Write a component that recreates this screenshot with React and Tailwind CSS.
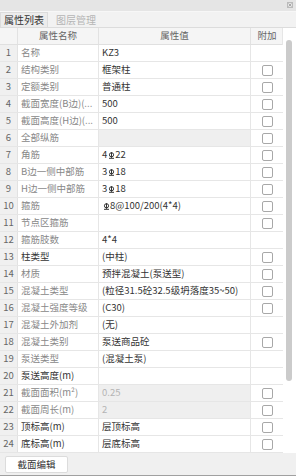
import React from 'react';

const FONT = { fontFamily: '"Noto Sans CJK SC", "Noto Sans", sans-serif' };

// rebar grade symbol (HRB400)
function Bar() {
  return (
    <svg width="7" height="7" viewBox="0 0 7 7" className="inline-block align-top mt-[0.5px] mx-[0.5px]">
      <circle cx="3.5" cy="2.8" r="2.1" fill="none" stroke="#333" strokeWidth="1" />
      <path d="M3.5 0.2v5.6M1 6.3h5" stroke="#333" strokeWidth="1" />
    </svg>
  );
}

const rows = [
  { name: '名称', value: 'KZ3', check: false },
  { name: '结构类别', value: '框架柱', check: true },
  { name: '定额类别', value: '普通柱', check: true },
  { name: '截面宽度(B边)(...', value: '500', check: true },
  { name: '截面高度(H边)(...', value: '500', check: true },
  { name: '全部纵筋', value: '', check: true, grayValue: true },
  { name: '角筋', value: <>4<Bar />22</>, check: true },
  { name: 'B边一侧中部筋', value: <>3<Bar />18</>, check: true },
  { name: 'H边一侧中部筋', value: <>3<Bar />18</>, check: true },
  { name: '箍筋', value: <><Bar />8@100/200(4*4)</>, check: true },
  { name: '节点区箍筋', value: '', check: true },
  { name: '箍筋肢数', value: '4*4', check: false },
  { name: '柱类型', value: '(中柱)', check: true, dark: true },
  { name: '材质', value: '预拌混凝土(泵送型)', check: true },
  { name: '混凝土类型', value: '(粒径31.5砼32.5级坍落度35~50)', check: true },
  { name: '混凝土强度等级', value: '(C30)', check: true },
  { name: '混凝土外加剂', value: '(无)', check: false },
  { name: '混凝土类别', value: '泵送商品砼', check: true },
  { name: '泵送类型', value: '(混凝土泵)', check: false },
  { name: '泵送高度(m)', value: '', check: false, dark: true },
  { name: '截面面积(m²)', value: '0.25', check: true, grayValue: true, dim: true },
  { name: '截面周长(m)', value: '2', check: true, grayValue: true, dim: true },
  { name: '顶标高(m)', value: '层顶标高', check: true, dark: true },
  { name: '底标高(m)', value: '层底标高', check: true, dark: true },
];

function Row({ row, index }) {
  return (
    <div className="grid grid-cols-[18px_81px_152px_32px] h-[17px] border-b border-[#e6e6e6]">
      <div className="bg-[#f0f0f0] border-r border-[#e2e2e2] flex items-center justify-center text-[#666]">
        {index + 1}
      </div>
      <div className={`border-r border-[#e6e6e6] flex items-center pl-[3px] whitespace-nowrap overflow-hidden ${row.dark ? 'text-[#333]' : 'text-[#888]'}`}>
        {row.name}
      </div>
      <div className={`border-r border-[#e6e6e6] flex items-center pl-[3px] whitespace-nowrap overflow-hidden ${row.grayValue ? 'bg-[#efefef]' : 'bg-white'} ${row.dim ? 'text-[#b4b4b4]' : 'text-[#333]'}`}>
        {row.value}
      </div>
      <div className="flex items-center justify-center bg-white">
        {row.check && <div className="w-[11px] h-[11px] border border-[#a8a8a8] rounded-[2px] bg-white" />}
      </div>
    </div>
  );
}

export default function App() {
  return (
    <div className="w-[296px] h-[476px] flex flex-col bg-[#f0f0f0] text-[9.5px] leading-none overflow-hidden" style={FONT}>
      {/* title bar */}
      <div className="h-[11px] bg-[#e5e5e5] flex justify-end items-start pr-[3px] pt-[2px]">
        <div className="w-[6px] h-[6px] border border-[#bbb] flex items-center justify-center">
          <svg width="4" height="4" viewBox="0 0 4 4"><path d="M0.5 0.5l3 3M3.5 0.5l-3 3" stroke="#999" strokeWidth="0.8" /></svg>
        </div>
      </div>
      {/* tabs */}
      <div className="h-[16px] flex items-end bg-[#f2f2f2] border-t border-[#f7f7f7]">
        <div className="h-[15px] px-[3px] flex items-center bg-[#ececec] border-x border-t border-[#dcdcdc] text-[#333] text-[10px]">属性列表</div>
        <div className="h-[15px] px-[8px] flex items-center text-[#b5b5b5] text-[10px]">图层管理</div>
      </div>
      {/* table + scrollbar */}
      <div className="flex border-t border-[#dcdcdc] bg-white">
        <div className="w-[283px] border-r border-[#e6e6e6]">
          <div className="grid grid-cols-[18px_81px_152px_32px] h-[17px] border-b border-[#e0e0e0] bg-[#f5f5f5] text-[#666]">
            <div className="border-r border-[#e2e2e2]" />
            <div className="border-r border-[#e2e2e2] flex items-center justify-center">属性名称</div>
            <div className="border-r border-[#e2e2e2] flex items-center justify-center">属性值</div>
            <div className="flex items-center justify-center">附加</div>
          </div>
          {rows.map((row, i) => (
            <Row key={i} row={row} index={i} />
          ))}
        </div>
        <div className="w-[12px] bg-white pt-[12px] flex justify-center">
          <div className="w-[6px] h-[341px] rounded-full bg-[#cbcbcb]" />
        </div>
      </div>
      {/* footer */}
      <div className="flex-1 bg-[#f0f0f0] border-b border-[#a0a0a0] pl-[5px] pt-[3px]">
        <div className="w-[63px] h-[17px] bg-white border border-[#dcdcdc] rounded-[2px] flex items-center justify-center text-[#333]">
          截面编辑
        </div>
      </div>
    </div>
  );
}
